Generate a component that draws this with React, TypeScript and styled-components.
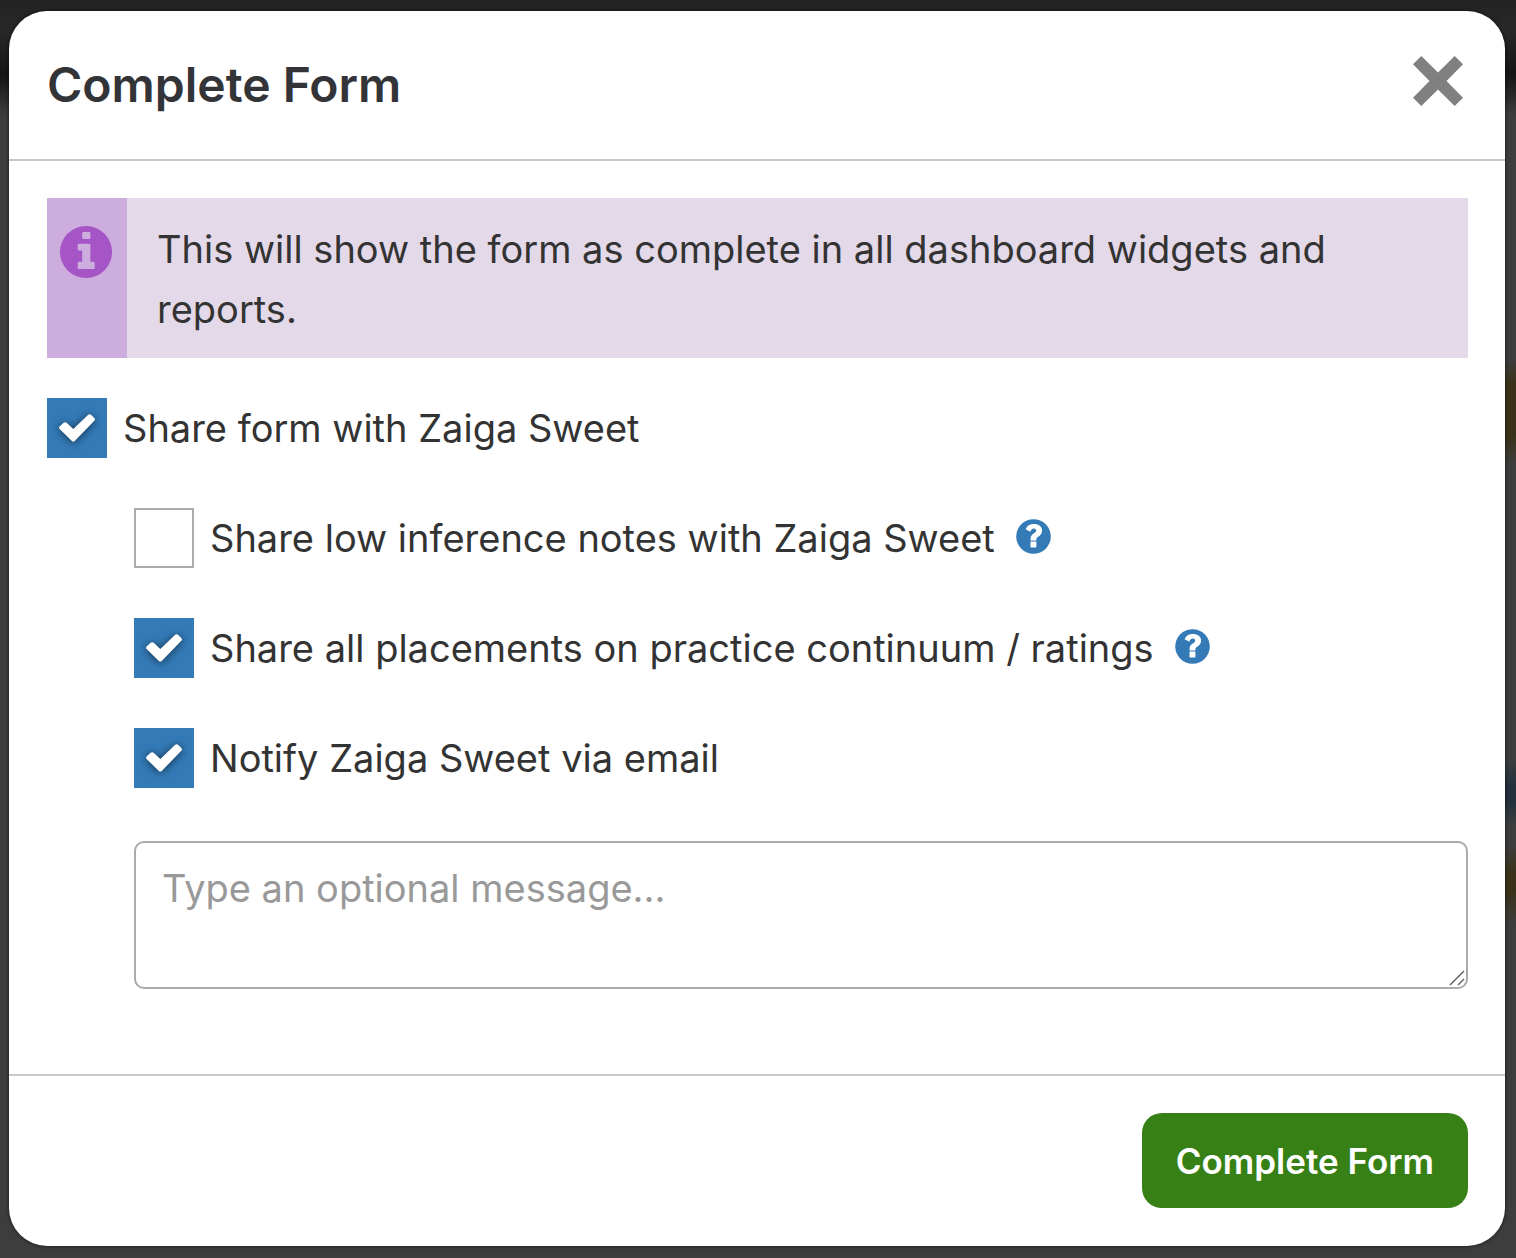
import React, { useState } from "react";
import styled, { createGlobalStyle } from "styled-components";

const GlobalStyle = createGlobalStyle`
  *, *::before, *::after {
    box-sizing: border-box;
  }
  body {
    margin: 0;
    background: #3d3d3d;
    color: #333;
    font-family: Inter, "Liberation Sans", sans-serif;
    font-size: 38px;
    line-height: 60px;
  }
`;

const Backdrop = styled.div`
  min-height: 100vh;
  padding: 11px 11px 12px 9px;
  background:
    linear-gradient(
        to bottom,
        transparent 360px,
        #3a3118 385px 435px,
        transparent 465px 760px,
        #22303c 785px 800px,
        transparent 825px 845px,
        #3a3118 875px 890px,
        transparent 925px
      )
      right / 11px 100% no-repeat,
    linear-gradient(to bottom, #222323 0, #282828 30px, #151515 75px, #3d3d3d 115px);
`;

const Dialog = styled.form`
  border-radius: 38px;
  background: #fff;
  box-shadow: 0 0 3px 1px rgba(0, 0, 0, 0.4);
`;

const Header = styled.header`
  display: flex;
  align-items: center;
  justify-content: space-between;
  padding: 44px 38px;
  border-bottom: 2px solid #c8c8c8;
`;

const Title = styled.h1`
  margin: 0;
  color: #333438;
  font-size: 48px;
  font-weight: 600;
  line-height: 60px;
`;

const CloseButton = styled.button`
  display: flex;
  padding: 0 4px 8px;
  border: 0;
  background: none;
  color: #808080;
  cursor: pointer;
`;

const Content = styled.div`
  display: flex;
  flex-direction: column;
  gap: 40px;
  padding: 37px 37px 85px 38px;
`;

const Notice = styled.div`
  display: flex;
  background: #e4d9e9;
`;

const NoticeIcon = styled.div`
  display: flex;
  flex: none;
  width: 80px;
  padding: 28px 13px;
  background: #ccaddd;
  color: #a555c5;
`;

const NoticeText = styled.p`
  margin: 0;
  padding: 21px 30px 19px;
`;

const Options = styled.div`
  display: flex;
  flex-direction: column;
  gap: 50px;
`;

const SubOptions = styled(Options)`
  padding-left: 87px;
`;

const OptionRow = styled.div`
  display: flex;
  align-items: center;
  gap: 21px;
`;

const OptionLabel = styled.label`
  display: flex;
  align-items: center;
  gap: 16px;
  cursor: pointer;
`;

const CheckFrame = styled.span`
  display: grid;
  flex: none;
  place-items: center;
  width: 60px;
  height: 60px;

  > * {
    grid-area: 1 / 1;
  }

  svg {
    pointer-events: none;
    filter: drop-shadow(0 1px 4px rgba(0, 0, 0, 0.6));
  }
`;

const CheckInput = styled.input`
  width: 60px;
  height: 60px;
  margin: 0;
  border: 2px solid #aaa;
  background: #fff;
  appearance: none;
  cursor: pointer;

  &:checked {
    border-color: #337ab7;
    background: #337ab7;
  }
`;

const HelpButton = styled.button`
  display: flex;
  padding: 0 0 4px;
  border: 0;
  background: none;
  color: #337ab7;
  cursor: pointer;
`;

const MessageField = styled.div`
  position: relative;
  display: flex;
  margin-top: 3px;
`;

const MessageBox = styled.textarea`
  width: 100%;
  height: 148px;
  padding: 15px 26px;
  border: 2px solid #aaa;
  border-radius: 10px;
  background: #fff;
  color: #333;
  font: inherit;
  resize: none;

  &::placeholder {
    color: #999;
    opacity: 1;
  }
`;

const Grip = styled.svg`
  position: absolute;
  right: 3px;
  bottom: 3px;
  pointer-events: none;
`;

const Footer = styled.footer`
  display: flex;
  justify-content: flex-end;
  padding: 37px 37px 38px;
  border-top: 2px solid #c8c8c8;
`;

const SubmitButton = styled.button`
  padding: 18px 34px 17px;
  border: 0;
  border-radius: 20px;
  background: #378015;
  color: #fff;
  font-family: inherit;
  font-size: 35px;
  font-weight: 600;
  line-height: 60px;
  cursor: pointer;
`;

const CloseIcon = () => (
  <svg width="50" height="50" viewBox="0 0 50 50" fill="currentColor" aria-hidden="true">
    <path d="M8.3 0 25 16.5 41.7 0 50 8.3 33.5 25 50 41.7 41.7 50 25 33.5 8.3 50 0 41.7 16.5 25 0 8.3Z" />
  </svg>
);

const InfoIcon = () => (
  <svg width="52" height="52" viewBox="0 0 52 52" aria-hidden="true">
    <circle cx="26" cy="26" r="26" fill="currentColor" />
    <g fill="#ccaddd">
      <rect x="22.2" y="6" width="8.2" height="7" rx="1" />
      <path d="M18.7 17.7h10.7q1 0 1 1v17h3.3q1 0 1 1V42q0 1-1 1h-15q-1 0-1-1v-5.3q0-1 1-1h3.5V24.6h-3.5q-1 0-1-1v-4.9q0-1 1-1Z" />
    </g>
  </svg>
);

const CheckIcon = () => (
  <svg width="36" height="28" viewBox="0 0 36 28" fill="#fff" aria-hidden="true">
    <path d="M.6 12.5 4.6 8.8Q6.3 7.6 7.9 8.9L14.3 15 29.2.8Q30.6-.5 32 .8L35.3 4Q36.6 5.4 35.3 6.8L16 26.7Q14.3 28.4 12.6 26.7L.6 15Q-.5 13.7.6 12.5Z" />
  </svg>
);

const HelpIcon = () => (
  <svg width="35" height="35" viewBox="0 0 35 35" aria-hidden="true">
    <circle cx="17.5" cy="17.5" r="17.3" fill="currentColor" />
    <path
      fill="#fff"
      d="M9.6 10.3C10.8 6.9 13.8 5 17.9 5c4.8 0 8.2 2.6 8.2 6.5 0 2.9-1.5 4.7-3.6 6-1.6 1-2.1 1.7-2.1 2.7v1.2h-5.8v-1.7c0-2.4 1.1-3.8 3.1-5.2 1.7-1.1 2.5-1.7 2.5-2.9 0-1.3-1-2-2.4-2-1.6 0-2.6.9-3.5 3.1Z"
    />
    <rect x="14.5" y="22.6" width="5.9" height="5.9" rx=".4" fill="#fff" />
  </svg>
);

type OptionProps = {
  label: string;
  initial?: boolean;
  help?: string;
};

function Option({ label, initial = false, help }: OptionProps) {
  const [checked, setChecked] = useState(initial);
  return (
    <OptionRow>
      <OptionLabel>
        <CheckFrame>
          <CheckInput
            type="checkbox"
            checked={checked}
            onChange={(event) => setChecked(event.target.checked)}
          />
          {checked && <CheckIcon />}
        </CheckFrame>
        {label}
      </OptionLabel>
      {help && (
        <HelpButton type="button" aria-label={help}>
          <HelpIcon />
        </HelpButton>
      )}
    </OptionRow>
  );
}

export default function App() {
  return (
    <>
      <GlobalStyle />
      <Backdrop>
        <Dialog
          role="dialog"
          aria-labelledby="dialog-title"
          onSubmit={(event) => event.preventDefault()}
        >
          <Header>
            <Title id="dialog-title">Complete Form</Title>
            <CloseButton type="button" aria-label="Close">
              <CloseIcon />
            </CloseButton>
          </Header>
          <Content>
            <Notice>
              <NoticeIcon>
                <InfoIcon />
              </NoticeIcon>
              <NoticeText>
                This will show the form as complete in all dashboard widgets and reports.
              </NoticeText>
            </Notice>
            <Options>
              <Option label="Share form with Zaiga Sweet" initial />
              <SubOptions>
                <Option
                  label="Share low inference notes with Zaiga Sweet"
                  help="About low inference notes"
                />
                <Option
                  label="Share all placements on practice continuum / ratings"
                  help="About placements and ratings"
                  initial
                />
                <Option label="Notify Zaiga Sweet via email" initial />
                <MessageField>
                  <MessageBox aria-label="Message" placeholder="Type an optional message..." />
                  <Grip width="16" height="16" viewBox="0 0 16 16" aria-hidden="true">
                    <path d="M1 15 15 1M9 15l6-6" stroke="#666" strokeWidth="1.5" fill="none" />
                  </Grip>
                </MessageField>
              </SubOptions>
            </Options>
          </Content>
          <Footer>
            <SubmitButton type="submit">Complete Form</SubmitButton>
          </Footer>
        </Dialog>
      </Backdrop>
    </>
  );
}
